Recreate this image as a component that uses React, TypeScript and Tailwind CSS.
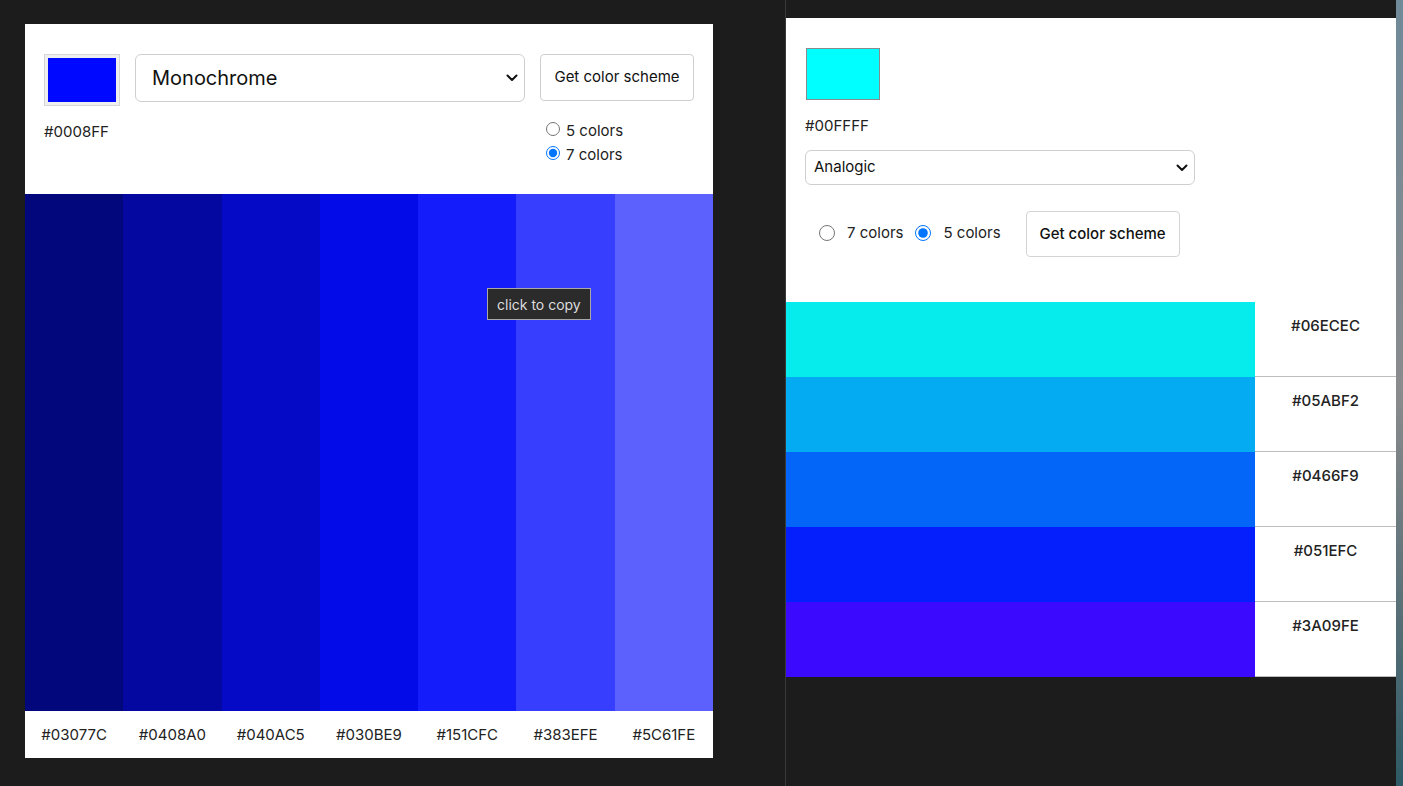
import React from 'react';

const mono = ['#03077C', '#0408A0', '#040AC5', '#030BE9', '#151CFC', '#383EFE', '#5C61FE'];
const analog = ['#06ECEC', '#05ABF2', '#0466F9', '#051EFC', '#3A09FE'];

function Chevron() {
  return (
    <svg width="12" height="8" viewBox="0 0 12 8" className="shrink-0">
      <path d="M1.5 1.5 L6 6 L10.5 1.5" fill="none" stroke="#111" strokeWidth="2" strokeLinecap="round" strokeLinejoin="round" />
    </svg>
  );
}

export default function App() {
  return (
    <div
      className="flex h-[786px] w-[1403px] overflow-hidden bg-[#1c1c1c] text-[#222]"
      style={{ fontFamily: 'Inter, "Noto Sans", sans-serif' }}
    >
      {/* left app */}
      <div className="pl-[25px] pt-[24px] w-[760px] shrink-0">
        <div className="w-[688px] bg-white">
          <div className="h-[170px] flex items-start gap-[15px] px-[19px] pt-[30px]">
            <div className="flex flex-col">
              <div className="w-[76px] h-[52px] bg-[#efefef] border border-[#d6d6d6] p-[3px]">
                <div className="w-full h-full bg-[#0008FF]" />
              </div>
              <div className="mt-[16px] text-[15px] leading-[20px]">#0008FF</div>
            </div>
            <div className="w-[390px] h-[48px] border border-[#cfcfcf] rounded-[6px] flex items-center justify-between pl-[16px] pr-[6px]">
              <span className="text-[20px] text-[#111]">Monochrome</span>
              <Chevron />
            </div>
            <div className="flex flex-col">
              <div className="w-[154px] h-[47px] border border-[#cfcfcf] rounded-[4px] flex items-center justify-center text-[15px] text-[#111]">
                Get color scheme
              </div>
              <div className="mt-[18px] pl-[6px] flex flex-col text-[15px] text-[#222]">
                <label className="flex items-center h-[24px] gap-[6px]">
                  <input type="radio" name="l" className="w-[14px] h-[14px] m-0 -mt-[5px]" readOnly />
                  5 colors
                </label>
                <label className="flex items-center h-[24px] gap-[6px]">
                  <input type="radio" name="l" className="w-[14px] h-[14px] m-0 -mt-[5px]" defaultChecked />
                  7 colors
                </label>
              </div>
            </div>
          </div>
          <div className="relative flex h-[517px]">
            {mono.map((c) => (
              <div key={c} className="flex-1" style={{ backgroundColor: c }} />
            ))}
            <div className="absolute left-[462px] top-[94px] h-[32px] px-[9px] flex items-center bg-[#2b2b2b] border border-[#a8a8a8] text-[#ddd] text-[14px]">
              click to copy
            </div>
          </div>
          <div className="flex h-[47px] items-center pt-[2px]">
            {mono.map((c) => (
              <div key={c} className="flex-1 text-center text-[15px] text-[#222]">
                {c}
              </div>
            ))}
          </div>
        </div>
      </div>

      {/* divider */}
      <div className="w-[25px] shrink-0" />
      <div className="w-[1px] shrink-0 bg-[#3a3a3a]" />

      {/* right app */}
      <div className="pt-[18px] w-[610px] shrink-0">
        <div className="bg-white pl-[19px] pr-[20px] pt-[30px] h-[284px]">
          <div className="ml-[1px] w-[74px] h-[52px] border border-[#8a8a8a] bg-[#00FFFF]" />
          <div className="mt-[16px] text-[15px] leading-[20px]">#00FFFF</div>
          <div className="mt-[14px] w-[390px] h-[35px] border border-[#cfcfcf] rounded-[6px] flex items-center justify-between pl-[8px] pr-[6px]">
            <span className="text-[15px] text-[#111]">Analogic</span>
            <Chevron />
          </div>
          <div className="mt-[26px] flex items-center">
            <div className="flex items-center pl-[14px] text-[15px] -mt-[2px]">
              <input type="radio" name="r" className="w-[16px] h-[16px] m-0" readOnly />
              <span className="ml-[12px]">7 colors</span>
              <input type="radio" name="r" className="w-[16px] h-[16px] m-0 ml-[12px]" defaultChecked />
              <span className="ml-[12px]">5 colors</span>
            </div>
            <div className="ml-[25px] w-[154px] h-[46px] border border-[#d4d4d4] rounded-[4px] flex items-center justify-center text-[15px] font-medium text-[#111]">
              Get color scheme
            </div>
          </div>
        </div>
        <div className="flex flex-col">
          {analog.map((c) => (
            <div key={c} className="flex h-[75px]">
              <div className="w-[469px]" style={{ backgroundColor: c }} />
              <div className="flex-1 bg-white border-b border-[#bdbdbd] pt-[13px] text-center text-[15px] font-medium text-[#222]">
                {c}
              </div>
            </div>
          ))}
        </div>
      </div>
      <div className="flex-1 bg-gradient-to-b from-[#6f8a99] via-[#8a8b8d] to-[#2d5a66]" />
    </div>
  );
}
